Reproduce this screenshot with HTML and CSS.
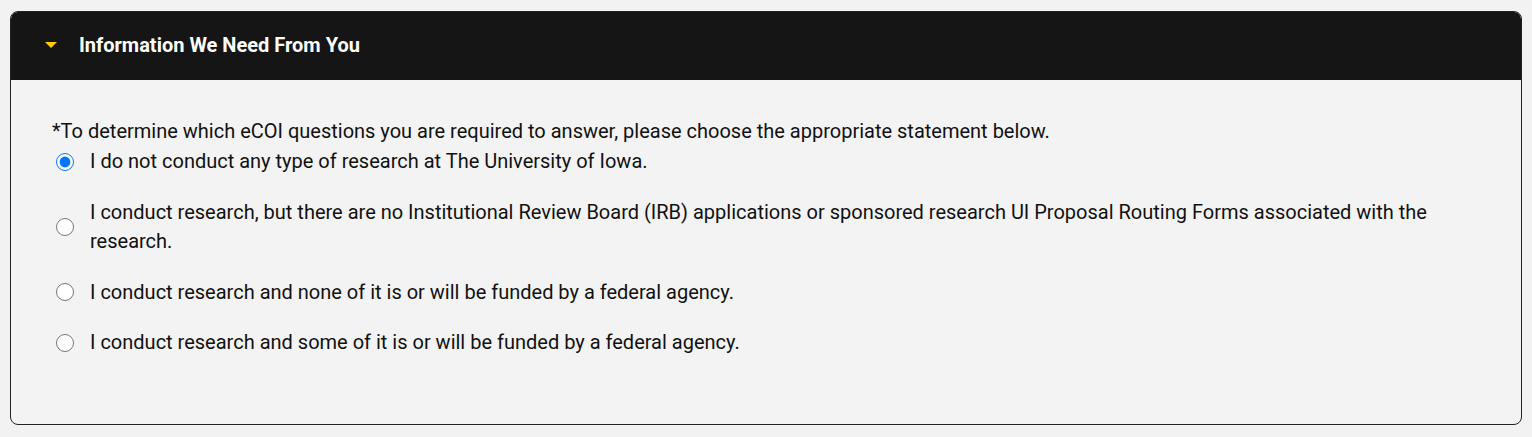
FILE: index.html
```html
<!DOCTYPE html>
<html>
<head>
	<title>Information We Need From You</title>
	<link rel="stylesheet" href="styles.css">
</head>
<body>
	<div class="panel">
		<div class="panel-header">
			<span class="caret"></span>
			<h2>Information We Need From You</h2>
		</div>
		<div class="panel-body">
			<p class="prompt">*To determine which eCOI questions you are required to answer, please choose the appropriate statement below.</p>
			<div class="options">
				<label class="option">
					<input type="radio" name="research" checked>
					<span>I do not conduct any type of research at The University of Iowa.</span>
				</label>
				<label class="option">
					<input type="radio" name="research">
					<span>I conduct research, but there are no Institutional Review Board (IRB) applications or sponsored research UI Proposal Routing Forms associated with the research.</span>
				</label>
				<label class="option">
					<input type="radio" name="research">
					<span>I conduct research and none of it is or will be funded by a federal agency.</span>
				</label>
				<label class="option">
					<input type="radio" name="research">
					<span>I conduct research and some of it is or will be funded by a federal agency.</span>
				</label>
			</div>
		</div>
	</div>
</body>
</html>
```

FILE: styles.css
```css
body {
	background-color: #f2f2f2;
	color: #111;
	font-family: Roboto, "Liberation Sans", sans-serif;
	font-size: 20px;
	margin: 11px 10px;
}
.panel {
	background-color: #f3f3f3;
	border: 1px solid #222;
	border-radius: 8px;
	height: 412px;
	overflow: hidden;
}
.panel-header {
	align-items: center;
	background-color: #151515;
	box-sizing: border-box;
	display: flex;
	gap: 22px;
	height: 68px;
	padding: 0 0 2px 34px;
}
.caret {
	border-left: 6px solid transparent;
	border-right: 6px solid transparent;
	border-top: 6px solid #ffcd00;
	height: 0;
	width: 0;
}
.panel-header h2 {
	color: #fff;
	font-size: 20px;
	font-weight: 700;
	margin: 0;
}
.panel-body {
	padding: 36px 41px 0 41px;
}
.prompt {
	line-height: 30px;
	margin: 0 0 1px;
}
.options {
	display: flex;
	flex-direction: column;
	gap: 21px;
}
.option {
	align-items: center;
	display: flex;
	gap: 16px;
	line-height: 29.5px;
}
.option input {
	flex: none;
	height: 18px;
	margin: 0 0 0 4px;
	width: 18px;
}
```
